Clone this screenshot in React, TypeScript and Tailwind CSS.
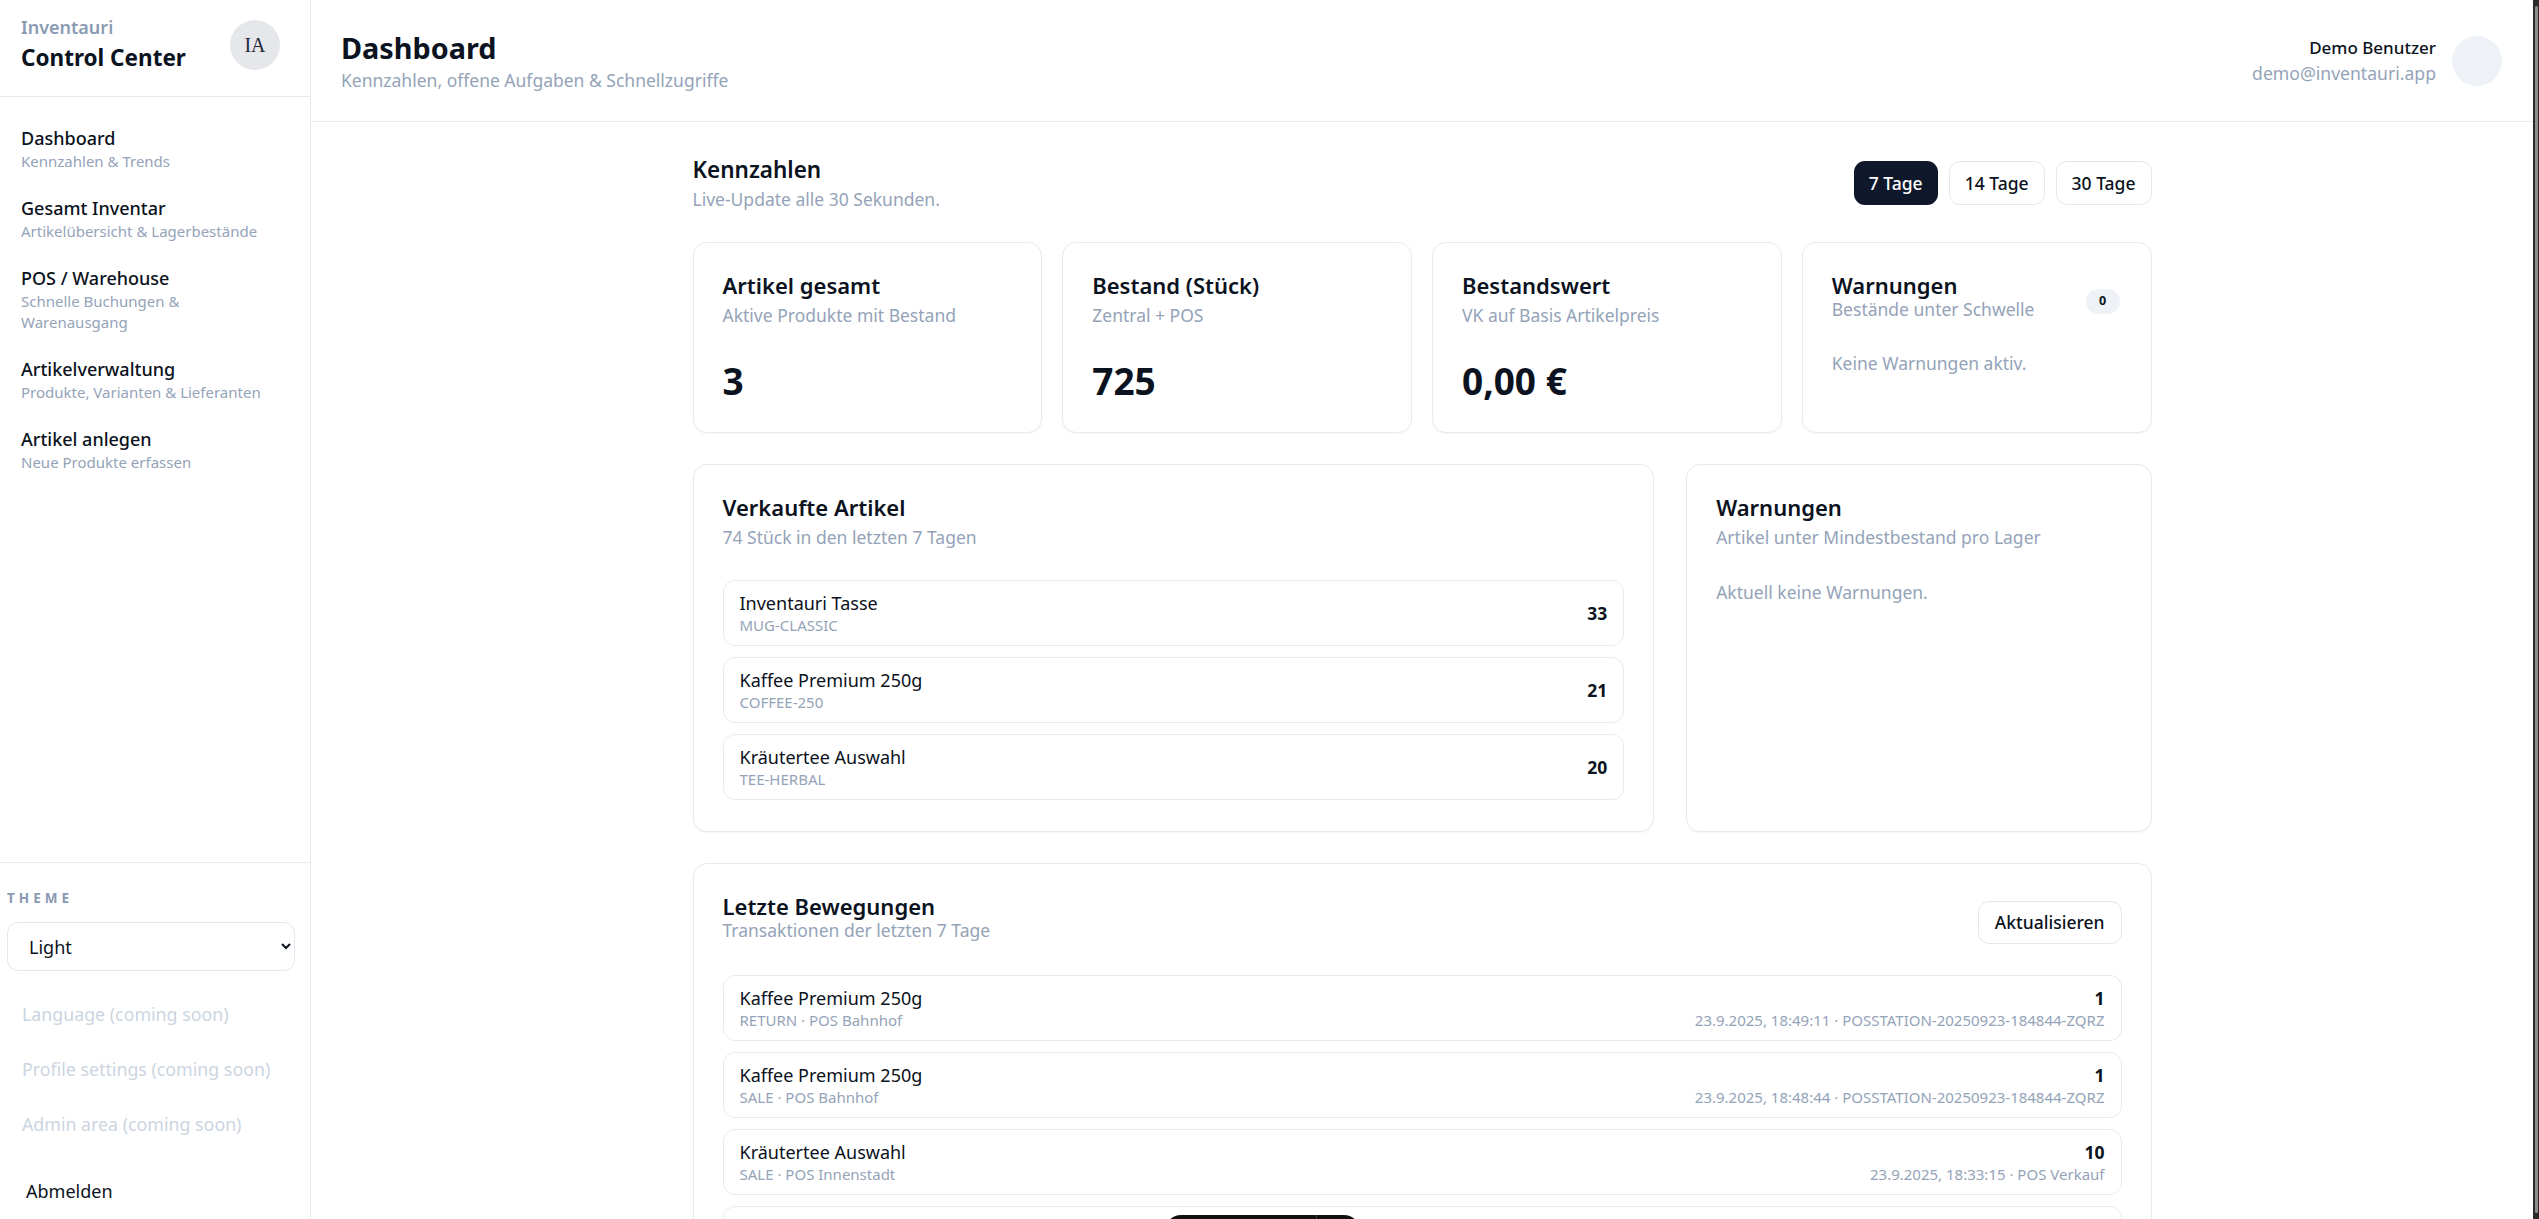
import { ReactNode } from 'react';

const NAV_ITEMS = [
  { title: 'Dashboard', sub: 'Kennzahlen & Trends' },
  { title: 'Gesamt Inventar', sub: 'Artikelübersicht & Lagerbestände' },
  { title: 'POS / Warehouse', sub: 'Schnelle Buchungen & Warenausgang' },
  { title: 'Artikelverwaltung', sub: 'Produkte, Varianten & Lieferanten' },
  { title: 'Artikel anlegen', sub: 'Neue Produkte erfassen' },
];

const SOLD = [
  { name: 'Inventauri Tasse', sku: 'MUG-CLASSIC', qty: 33 },
  { name: 'Kaffee Premium 250g', sku: 'COFFEE-250', qty: 21 },
  { name: 'Kräutertee Auswahl', sku: 'TEE-HERBAL', qty: 20 },
];

const MOVEMENTS = [
  {
    name: 'Kaffee Premium 250g',
    meta: 'RETURN · POS Bahnhof',
    qty: 1,
    info: '23.9.2025, 18:49:11 · POSSTATION-20250923-184844-ZQRZ',
  },
  {
    name: 'Kaffee Premium 250g',
    meta: 'SALE · POS Bahnhof',
    qty: 1,
    info: '23.9.2025, 18:48:44 · POSSTATION-20250923-184844-ZQRZ',
  },
  {
    name: 'Kräutertee Auswahl',
    meta: 'SALE · POS Innenstadt',
    qty: 10,
    info: '23.9.2025, 18:33:15 · POS Verkauf',
  },
  {
    name: 'Inventauri Tasse',
    meta: 'SALE · POS Innenstadt',
    qty: 5,
    info: '23.9.2025, 18:30:02 · POS Verkauf',
  },
];

function Card({ children, className = '' }: { children: ReactNode; className?: string }) {
  return (
    <div
      className={`rounded-[14px] border border-[#e6ebf2] bg-white p-[29px] shadow-[0_1px_2px_rgba(15,23,42,0.04)] ${className}`}
    >
      {children}
    </div>
  );
}

function StatCard({ title, sub, value }: { title: string; sub: string; value: string }) {
  return (
    <Card>
      <p className="text-[22px] font-semibold leading-[26px] text-[#0b1220]">{title}</p>
      <p className="mt-[5px] text-[17.5px] leading-[24px] text-[#94a3b8]">{sub}</p>
      <p className="mt-[32px] text-[37px] font-bold leading-[44px] text-[#0b1220]">{value}</p>
    </Card>
  );
}

function Row({ name, meta, right, info }: { name: string; meta: string; right: number; info?: string }) {
  return (
    <div className="flex items-center justify-between rounded-[12px] border border-[#e6ebf2] bg-white px-4 pb-[9px] pt-[10px]">
      <div>
        <p className="text-[18px] leading-[24px] text-[#0b1220]">{name}</p>
        <p className="text-[15px] leading-[21px] text-[#94a3b8]">{meta}</p>
      </div>
      {info ? (
        <div className="text-right">
          <p className="text-[17.5px] font-bold leading-[24px] text-[#0b1220]">{right}</p>
          <p className="text-[15px] leading-[21px] text-[#94a3b8]">{info}</p>
        </div>
      ) : (
        <p className="text-[17.5px] font-bold text-[#0b1220]">{right}</p>
      )}
    </div>
  );
}

function Sidebar() {
  return (
    <aside className="flex h-full w-[311px] shrink-0 flex-col border-r border-[#e6ebf2] bg-white">
      <div className="flex h-[97px] items-start justify-between border-b border-[#e6ebf2] pl-[21px] pr-[30px] pt-4">
        <div>
          <p className="text-[18px] font-semibold leading-[22px] text-[#8a9ab3]">Inventauri</p>
          <p className="mt-[5px] text-[22.5px] font-bold leading-[30px] text-[#0b1220]">Control Center</p>
        </div>
        <div className="mt-[4px] flex h-[50px] w-[50px] items-center justify-center rounded-full bg-[#e5e7eb] font-['Liberation_Serif',serif] text-[20px] text-[#1f2937]">
          IA
        </div>
      </div>

      <nav className="flex flex-col gap-[23px] pl-3 pr-6 pt-7">
        {NAV_ITEMS.map((item) => (
          <a key={item.title} className="block px-[9px]">
            <p className="text-[18px] font-medium leading-[26px] text-[#0b1220]">{item.title}</p>
            <p className="text-[15px] leading-[21px] text-[#94a3b8]">{item.sub}</p>
          </a>
        ))}
      </nav>

      <div className="mt-auto h-[357px] shrink-0 border-t border-[#e6ebf2] pl-[7px] pr-[15px] pt-[25px]">
        <p className="text-[13.5px] font-bold leading-[20px] tracking-[0.3em] text-[#8a9ab3]">THEME</p>
        <select className="mt-[14px] h-[49px] w-full rounded-[11px] border border-[#e2e8f0] bg-white pl-[17px] pr-2 text-[18px] text-[#0b1220] outline-none">
          <option>Light</option>
          <option>Dark</option>
          <option>System</option>
        </select>
        <div className="mt-[16px] flex flex-col">
          {['Language (coming soon)', 'Profile settings (coming soon)', 'Admin area (coming soon)'].map((t) => (
            <p key={t} className="flex h-[55px] items-center px-[15px] text-[17.8px] text-[#cbd5e1]">
              {t}
            </p>
          ))}
          <button type="button" className="mt-[12px] flex h-[55px] items-center px-[19px] text-[18px] text-[#0b1220]">
            Abmelden
          </button>
        </div>
      </div>
    </aside>
  );
}

export default function App() {
  return (
    <div className="relative flex h-screen overflow-hidden bg-white font-['Noto_Sans',sans-serif] text-[#0b1220]">
      <Sidebar />

      <main className="flex min-w-0 flex-1 flex-col">
        <header className="flex h-[122px] shrink-0 items-center justify-between border-b border-[#e6ebf2] pl-[30px] pr-[31px]">
          <div>
            <h1 className="text-[28.8px] font-bold leading-[36px] text-[#0b1220]">Dashboard</h1>
            <p className="mt-[2px] text-[17.5px] leading-[24px] text-[#94a3b8]">
              Kennzahlen, offene Aufgaben &amp; Schnellzugriffe
            </p>
          </div>
          <div className="flex items-center gap-4">
            <div className="text-right">
              <p className="text-[17px] font-medium leading-[24px] text-[#0b1220]">Demo Benutzer</p>
              <p className="mt-[1px] text-[17.6px] leading-[24px] text-[#94a3b8]">demo@inventauri.app</p>
            </div>
            <div className="h-[50px] w-[50px] rounded-full bg-[#eef2f7]" />
          </div>
        </header>

        <div className="min-h-0 flex-1 overflow-hidden">
          <div className="mx-auto flex max-w-[1459px] flex-col gap-[31px] pt-[33px]">
            <div className="flex items-center justify-between">
              <div>
                <h2 className="text-[22.5px] font-semibold leading-[30px] text-[#0b1220]">Kennzahlen</h2>
                <p className="mt-[2px] text-[17.5px] leading-[24px] text-[#94a3b8]">
                  Live-Update alle 30 Sekunden.
                </p>
              </div>
              <div className="flex gap-[11px]">
                <button className="h-[44px] rounded-[11px] bg-[#0f172a] px-[15px] text-[17.5px] font-medium text-white">
                  7 Tage
                </button>
                <button className="h-[44px] rounded-[11px] border border-[#e2e8f0] bg-white px-[15px] text-[17.5px] font-medium text-[#0b1220]">
                  14 Tage
                </button>
                <button className="h-[44px] rounded-[11px] border border-[#e2e8f0] bg-white px-[15px] text-[17.5px] font-medium text-[#0b1220]">
                  30 Tage
                </button>
              </div>
            </div>

            <div className="grid grid-cols-4 gap-5">
              <StatCard title="Artikel gesamt" sub="Aktive Produkte mit Bestand" value="3" />
              <StatCard title="Bestand (Stück)" sub="Zentral + POS" value="725" />
              <StatCard title="Bestandswert" sub="VK auf Basis Artikelpreis" value="0,00 €" />
              <Card>
                <div className="flex items-start justify-between">
                  <div>
                    <p className="text-[22px] font-semibold leading-[26px] text-[#0b1220]">Warnungen</p>
                    <p className="text-[17.5px] leading-[22px] text-[#94a3b8]">Bestände unter Schwelle</p>
                  </div>
                  <span className="mr-[2px] mt-[17px] flex h-[25px] min-w-[34px] items-center justify-center rounded-full bg-[#eef2f7] px-3 text-[12.5px] font-bold text-[#0b1220]">
                    0
                  </span>
                </div>
                <p className="mt-[31px] text-[17.5px] leading-[24px] text-[#94a3b8]">Keine Warnungen aktiv.</p>
              </Card>
            </div>

            <div className="grid grid-cols-[961fr_465fr] gap-8">
              <Card>
                <p className="text-[22px] font-semibold leading-[26px] text-[#0b1220]">Verkaufte Artikel</p>
                <p className="mt-[5px] text-[17.5px] leading-[24px] text-[#94a3b8]">74 Stück in den letzten 7 Tagen</p>
                <div className="mt-[31px] flex flex-col gap-[11px]">
                  {SOLD.map((s) => (
                    <Row key={s.sku} name={s.name} meta={s.sku} right={s.qty} />
                  ))}
                </div>
                <div className="h-[2px]" />
              </Card>
              <Card>
                <p className="text-[22px] font-semibold leading-[26px] text-[#0b1220]">Warnungen</p>
                <p className="mt-[5px] text-[17.5px] leading-[24px] text-[#94a3b8]">
                  Artikel unter Mindestbestand pro Lager
                </p>
                <p className="mt-[31px] text-[17.5px] leading-[24px] text-[#94a3b8]">Aktuell keine Warnungen.</p>
              </Card>
            </div>

            <Card>
              <div className="flex items-start justify-between">
                <div>
                  <p className="text-[22px] font-semibold leading-[26px] text-[#0b1220]">Letzte Bewegungen</p>
                  <p className="text-[17.5px] leading-[22px] text-[#94a3b8]">Transaktionen der letzten 7 Tage</p>
                </div>
                <button className="mt-[8px] h-[43px] rounded-[11px] border border-[#e2e8f0] bg-white px-[16px] text-[17.5px] font-medium text-[#0b1220]">
                  Aktualisieren
                </button>
              </div>
              <div className="mt-[31px] flex flex-col gap-[11px]">
                {MOVEMENTS.map((m, i) => (
                  <Row key={i} name={m.name} meta={m.meta} right={m.qty} info={m.info} />
                ))}
              </div>
            </Card>
          </div>
        </div>
      </main>

      <div className="flex h-full w-[6px] shrink-0 justify-center bg-[#2b2b2b] py-[6px]">
        <div className="h-full w-[3px] rounded-full bg-[#8d8d8d]" />
      </div>

      <div className="absolute left-[1165px] top-[1215px] flex h-[32px] w-[195px] overflow-hidden rounded-full bg-[#111111]">
        <div className="w-[152px] border-r border-[#3a3a3a]" />
      </div>
    </div>
  );
}
